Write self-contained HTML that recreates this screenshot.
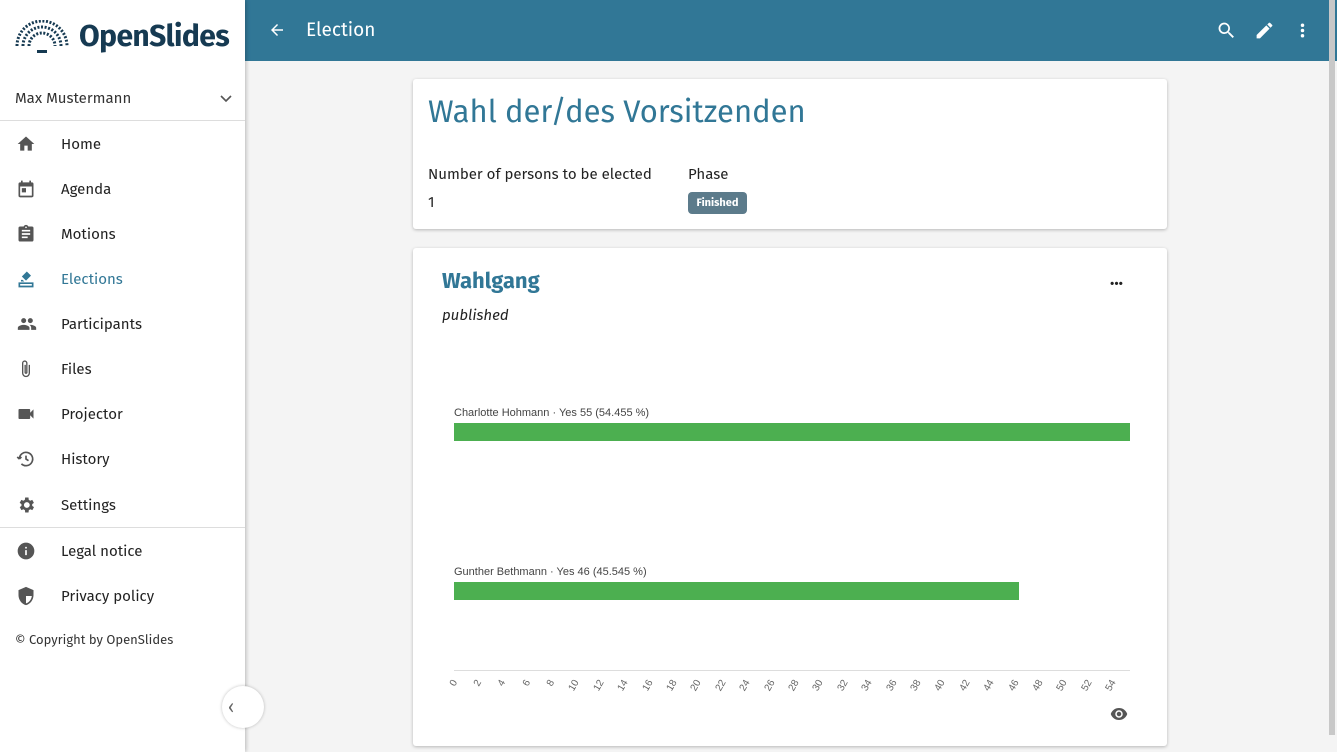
<!DOCTYPE html><html><head><meta charset="utf-8"><style>
*{box-sizing:border-box;margin:0;padding:0}
body{width:1337px;height:752px;overflow:hidden;background:#f4f4f4;font-family:"Fira Sans","Liberation Sans",sans-serif;position:relative}
.side{position:absolute;left:0;top:0;width:245px;height:752px;background:#fff;box-shadow:1px 0 4px rgba(0,0,0,.25);z-index:2}
.top{position:absolute;left:245px;top:0;right:0;height:61px;background:#317796;color:#fff}
.nav{position:absolute;left:0;width:245px;height:45px;font-size:15px;color:#222}
.nav span{position:absolute;left:61px;top:50%;transform:translateY(-50%)}
.nav svg{position:absolute;left:16px;top:50%;transform:translateY(-50%)}
.card{position:absolute;background:#fff;box-shadow:0 1px 3px rgba(0,0,0,.25);border-radius:3px}
.tick{position:absolute;top:678px;font-size:10px;color:#666;transform:rotate(-60deg);transform-origin:right top;font-family:"Liberation Sans",sans-serif}
</style></head><body>
<div class="side">
 <svg style="position:absolute;left:15px;top:20px" width="54" height="34" viewBox="0 0 54 34">
  <g fill="#163a52">
  <path d="M2 26a25 25 0 0 1 50 0" fill="none" stroke="#163a52" stroke-width="3" stroke-dasharray="2 1.6"/>
  <path d="M8 26a19 19 0 0 1 38 0" fill="none" stroke="#163a52" stroke-width="3" stroke-dasharray="2 1.6"/>
  <path d="M14 26a13 13 0 0 1 26 0" fill="none" stroke="#163a52" stroke-width="3" stroke-dasharray="2 1.6"/>
  <rect x="22" y="30" width="10" height="3"/></g></svg>
 <div style="position:absolute;left:79px;top:18px;font-size:30px;font-weight:bold;color:#163a52;letter-spacing:-0.6px">OpenSlides</div>
 <div style="position:absolute;left:15px;top:89px;font-size:15px;color:#333">Max Mustermann</div>
 <svg style="position:absolute;left:219px;top:94px" width="14" height="10" viewBox="0 0 14 10"><path d="M2 2l5 5 5-5" fill="none" stroke="#555" stroke-width="1.6"/></svg>
 <div style="position:absolute;left:0;top:120px;width:245px;border-top:1px solid #ddd"></div>
 <div class="nav" style="top:121px"><svg width="20" height="20" viewBox="0 0 24 24"><path fill="#555" d="M10 20v-6h4v6h5v-8h3L12 3 2 12h3v8z"/></svg><span>Home</span></div>
 <div class="nav" style="top:166px"><svg width="20" height="20" viewBox="0 0 24 24"><path fill="#555" d="M19 4h-1V2h-2v2H8V2H6v2H5a2 2 0 0 0-2 2v14a2 2 0 0 0 2 2h14a2 2 0 0 0 2-2V6a2 2 0 0 0-2-2zm0 16H5V9h14zM7 11h5v5H7z"/></svg><span>Agenda</span></div>
 <div class="nav" style="top:211px"><svg width="20" height="20" viewBox="0 0 24 24"><path fill="#555" d="M19 3h-4.2C14.4 1.8 13.3 1 12 1s-2.4.8-2.8 2H5a2 2 0 0 0-2 2v14a2 2 0 0 0 2 2h14a2 2 0 0 0 2-2V5a2 2 0 0 0-2-2zm-7 0a1 1 0 1 1 0 2 1 1 0 0 1 0-2zm2 14H7v-2h7zm3-4H7v-2h10zm0-4H7V7h10z"/></svg><span>Motions</span></div>
 <div class="nav" style="top:256px;color:#317796"><svg width="20" height="20" viewBox="0 0 24 24"><path fill="#317796" d="M3 16h18v6H3zm2 2v2h14v-2zM13 3l5 5-6 6-5-5zM6 13h2l2 2H6z"/></svg><span>Elections</span></div>
 <div class="nav" style="top:301px"><svg width="22" height="20" viewBox="0 0 24 24"><path fill="#555" d="M16 11a3 3 0 1 0 0-6 3 3 0 0 0 0 6zm-8 0a3 3 0 1 0 0-6 3 3 0 0 0 0 6zm0 2c-2.3 0-7 1.2-7 3.5V19h14v-2.5C15 14.2 10.3 13 8 13zm8 0h-1c1.2.8 2 2 2 3.5V19h6v-2.5c0-2.3-4.7-3.5-7-3.5z"/></svg><span>Participants</span></div>
 <div class="nav" style="top:346px"><svg width="20" height="20" viewBox="0 0 24 24"><path fill="none" stroke="#555" stroke-width="1.6" d="M16 7v10a4 4 0 0 1-8 0V5a2.5 2.5 0 0 1 5 0v11a1 1 0 0 1-2 0V7"/></svg><span>Files</span></div>
 <div class="nav" style="top:391px"><svg width="20" height="20" viewBox="0 0 24 24"><path fill="#555" d="M17 10.5V7a1 1 0 0 0-1-1H4a1 1 0 0 0-1 1v10a1 1 0 0 0 1 1h12a1 1 0 0 0 1-1v-3.5l4 4v-11z"/></svg><span>Projector</span></div>
 <div class="nav" style="top:436px"><svg width="20" height="20" viewBox="0 0 24 24"><path fill="none" stroke="#555" stroke-width="2" d="M4 12a8 8 0 1 1 2.5 5.8M4 12l-2.5-2.5M4 12l2.5-2.5M12 8v4l3 2"/></svg><span>History</span></div>
 <div class="nav" style="top:482px"><svg width="20" height="20" viewBox="0 0 24 24"><path fill="#555" d="M19.4 13a7 7 0 0 0 0-2l2.1-1.6-2-3.5-2.5 1a7 7 0 0 0-1.7-1L15 3h-4l-.4 2.9a7 7 0 0 0-1.7 1l-2.5-1-2 3.5L6.6 11a7 7 0 0 0 0 2l-2.1 1.6 2 3.5 2.5-1a7 7 0 0 0 1.7 1L11 21h4l.4-2.9a7 7 0 0 0 1.7-1l2.5 1 2-3.5zM13 15.5a3.5 3.5 0 1 1 0-7 3.5 3.5 0 0 1 0 7z"/></svg><span>Settings</span></div>
 <div style="position:absolute;left:0;top:527px;width:245px;border-top:1px solid #ddd"></div>
 <div class="nav" style="top:528px"><svg width="20" height="20" viewBox="0 0 24 24"><path fill="#555" d="M12 2a10 10 0 1 0 0 20 10 10 0 0 0 0-20zm1 15h-2v-6h2zm0-8h-2V7h2z"/></svg><span>Legal notice</span></div>
 <div class="nav" style="top:573px"><svg width="20" height="20" viewBox="0 0 24 24"><path fill="#555" d="M12 1 3 5v6c0 5.5 3.8 10.7 9 12 5.2-1.3 9-6.5 9-12V5zm0 11h7c-.5 4.1-3.3 7.8-7 8.9z"/></svg><span>Privacy policy</span></div>
 <div style="position:absolute;left:15px;top:633px;font-size:13px;color:#333">© Copyright by OpenSlides</div>
 <div style="position:absolute;left:222px;top:686px;width:42px;height:42px;border-radius:50%;background:#fff;box-shadow:0 0 3px rgba(0,0,0,.25)"></div>
 <div style="position:absolute;left:228px;top:696px;font-size:18px;color:#666">‹</div>
</div>
<div class="top">
 <svg style="position:absolute;left:23px;top:21px" width="18" height="18" viewBox="0 0 24 24"><path fill="#fff" d="M20 11H7.8l5.6-5.6L12 4l-8 8 8 8 1.4-1.4L7.8 13H20z"/></svg>
 <div style="position:absolute;left:61px;top:19px;font-size:19px">Election</div>
 <svg style="position:absolute;left:971px;top:20px" width="21" height="21" viewBox="0 0 24 24"><path fill="#fff" d="M15.5 14h-.8l-.3-.3A6.5 6.5 0 1 0 9.5 16a6.5 6.5 0 0 0 4.2-1.6l.3.3v.8l5 5 1.5-1.5zm-6 0a4.5 4.5 0 1 1 0-9 4.5 4.5 0 0 1 0 9z"/></svg>
 <svg style="position:absolute;left:1009px;top:20px" width="21" height="21" viewBox="0 0 24 24"><path fill="#fff" d="M3 17.2V21h3.8L17.8 9.9l-3.7-3.7zM20.7 7a1 1 0 0 0 0-1.4l-2.3-2.3a1 1 0 0 0-1.4 0l-1.8 1.8 3.7 3.7z"/></svg>
 <svg style="position:absolute;left:1047px;top:20px" width="21" height="21" viewBox="0 0 24 24"><path fill="#fff" d="M12 8a2 2 0 1 0 0-4 2 2 0 0 0 0 4zm0 2a2 2 0 1 0 0 4 2 2 0 0 0 0-4zm0 6a2 2 0 1 0 0 4 2 2 0 0 0 0-4z"/></svg>
</div>
<div style="position:absolute;right:2px;top:0;width:6px;height:735px;background:#c8c8c8"></div>
<div class="card" style="left:413px;top:79px;width:754px;height:150px">
 <div style="position:absolute;left:15px;top:15px;font-size:31px;color:#317796">Wahl der/des Vorsitzenden</div>
 <div style="position:absolute;left:15px;top:86px;font-size:15px;color:#222">Number of persons to be elected</div>
 <div style="position:absolute;left:15px;top:114px;font-size:15px;color:#222">1</div>
 <div style="position:absolute;left:275px;top:86px;font-size:15px;color:#222">Phase</div>
 <div style="position:absolute;left:275px;top:113px;width:59px;height:22px;background:#5c7b8b;border-radius:4px;color:#fff;font-size:11px;font-weight:bold;text-align:center;line-height:22px">Finished</div>
</div>
<div class="card" style="left:413px;top:248px;width:754px;height:498px">
 <div style="position:absolute;left:29px;top:19px;font-size:22px;font-weight:bold;color:#317796">Wahlgang</div>
 <div style="position:absolute;left:697px;top:24px;font-size:18px;font-weight:bold;color:#222">···</div>
 <div style="position:absolute;left:29px;top:58px;font-size:15px;font-style:italic;color:#222">published</div>
 <div style="position:absolute;left:41px;top:159px;font-size:11px;color:#444;font-family:'Liberation Sans',sans-serif">Charlotte Hohmann · Yes 55 (54.455 %)</div>
 <div style="position:absolute;left:41px;top:175px;width:676px;height:18px;background:#4caf50"></div>
 <div style="position:absolute;left:41px;top:318px;font-size:11px;color:#444;font-family:'Liberation Sans',sans-serif">Gunther Bethmann · Yes 46 (45.545 %)</div>
 <div style="position:absolute;left:41px;top:334px;width:565px;height:18px;background:#4caf50"></div>
 <div style="position:absolute;left:41px;top:422px;width:676px;border-top:1px solid #ddd"></div>
 <svg style="position:absolute;left:697px;top:459px" width="18" height="14" viewBox="0 0 24 18"><path fill="#555" d="M12 1C7 1 2.7 4.1 1 9c1.7 4.9 6 8 11 8s9.300-3.1 11-8c-1.7-4.9-6-8-11-8zm0 13a5 5 0 1 1 0-10 5 5 0 0 1 0 10zm0-8a3 3 0 1 0 0 6 3 3 0 0 0 0-6z"/></svg>
</div>
<div class="tick" style="left:445px">0</div><div class="tick" style="left:469px">2</div><div class="tick" style="left:493px">4</div><div class="tick" style="left:518px">6</div><div class="tick" style="left:542px">8</div><div class="tick" style="left:561px">10</div><div class="tick" style="left:586px">12</div><div class="tick" style="left:610px">14</div><div class="tick" style="left:635px">16</div><div class="tick" style="left:659px">18</div><div class="tick" style="left:683px">20</div><div class="tick" style="left:708px">22</div><div class="tick" style="left:732px">24</div><div class="tick" style="left:757px">26</div><div class="tick" style="left:781px">28</div><div class="tick" style="left:805px">30</div><div class="tick" style="left:830px">32</div><div class="tick" style="left:854px">34</div><div class="tick" style="left:879px">36</div><div class="tick" style="left:903px">38</div><div class="tick" style="left:927px">40</div><div class="tick" style="left:952px">42</div><div class="tick" style="left:976px">44</div><div class="tick" style="left:1001px">46</div><div class="tick" style="left:1025px">48</div><div class="tick" style="left:1049px">50</div><div class="tick" style="left:1074px">52</div><div class="tick" style="left:1098px">54</div>
</body></html>
